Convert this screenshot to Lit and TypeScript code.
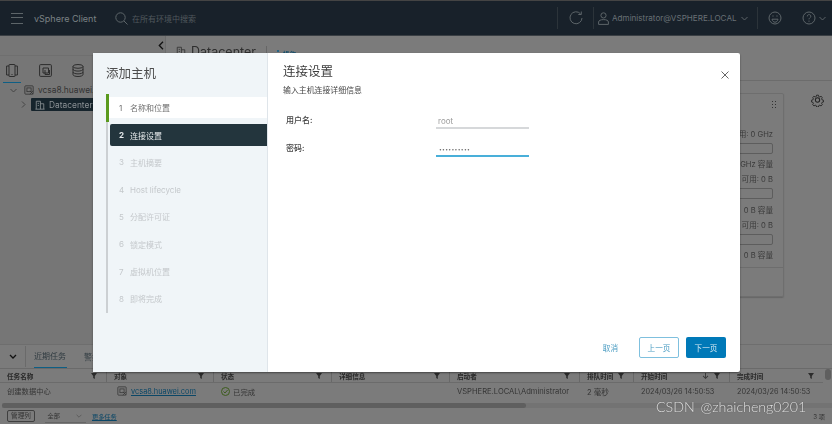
import { LitElement, css, html, svg } from "lit";
import { customElement } from "lit/decorators.js";

const steps = ["名称和位置", "连接设置", "主机摘要", "Host lifecycle", "分配许可证", "锁定模式", "虚拟机位置", "即将完成"];

const filterIcon = svg`<svg class="filter" viewBox="0 0 8 8" width="8" height="8"><path d="M1 1h6L4.8 4v3L3.2 6V4z" fill="#2c2c2c"/></svg>`;

const vmIcon = svg`<svg class="ic" viewBox="0 0 12 12" fill="none" stroke="currentColor"><rect x="1" y="1" width="10" height="10" rx="1"/><rect x="3.5" y="3.5" width="5" height="4.5"/><path d="M7 7l4 4M11 7l-4 4" stroke-width=".9"/></svg>`;

const dcIcon = svg`<svg class="ic" viewBox="0 0 12 12" fill="none" stroke="currentColor"><path d="M1.5 11V1.5h5V11M6.5 4.5h4V11M.5 11h11M3.2 4h1.6M3.2 6.5h1.6"/></svg>`;

@customElement("app-root")
export class AppRoot extends LitElement {
  static styles = css`
    :host {
      display: block;
      position: relative;
      width: 832px;
      height: 424px;
      overflow: hidden;
      background: #7b7b7b;
      color: #333;
      font-family: "Inter", "Noto Sans CJK SC", sans-serif;
      font-size: 8px;
    }
    .shell { display: flex; flex-direction: column; height: 424px; filter: blur(0.35px); }
    .ic { display: block; width: 10px; height: 10px; flex: none; }

    /* top bar */
    .top {
      flex: none;
      box-sizing: border-box;
      height: 36px;
      display: flex;
      align-items: center;
      padding-right: 6px;
      background: #18212a;
      border-top: 1px solid #444;
      border-bottom: 1px solid #3a3f44;
      color: #6e757a;
    }
    .burger { margin-left: 11px; width: 12px; height: 9px; border-top: 1px solid #5d6569; border-bottom: 1px solid #5d6569; position: relative; }
    .burger::after { content: ""; position: absolute; left: 0; right: 0; top: 3px; border-top: 1px solid #5d6569; }
    .brand { margin-left: 11px; font-size: 9px; color: #7b8185; width: 81px; }
    .search { display: block; }
    .hint { margin-left: 4px; font-size: 8px; color: #50585d; flex: 1; }
    .sep { width: 1px; height: 22px; background: #2c343a; }
    .user { margin-left: 3px; font-size: 8.1px; color: #687075; width: 129px; white-space: nowrap; }
    .chev { display: block; }

    /* middle */
    .middle { flex: 1; min-height: 0; display: flex; }
    .nav { flex: none; width: 166px; box-sizing: border-box; background: #767676; border-right: 1px solid #6c6c6c; }
    .collapse { height: 19px; display: flex; justify-content: flex-end; align-items: center; padding-right: 1px; border-bottom: 1px solid #6f6f6f; }
    .tabs { display: flex; gap: 15px; padding: 8px 0 0 3px; color: #2d2d2d; height: 19px; }
    .tab { width: 18px; height: 18px; display: flex; justify-content: center; }
    .tab.on { border-bottom: 1px solid #0e5f85; }
    .tree { font-size: 8.4px; color: #222; }
    .node { display: flex; align-items: center; gap: 4px; height: 14.5px; padding-left: 10px; color: #333; }
    .node.child { padding-left: 21px; gap: 5px; }
    .node .ic { margin-left: 3px; }
    .pick { display: flex; align-items: center; gap: 4px; background: #16242c; color: #8a9094; height: 13px; padding: 0 30px 0 4px; border-radius: 1px; }
    .pick .ic { margin-left: 0; }

    .content { flex: 1; min-width: 0; display: flex; flex-direction: column; }
    .head { flex: none; height: 45px; box-sizing: border-box; display: flex; align-items: flex-start; gap: 5px; padding: 10px 0 0 10px; border-bottom: 1px solid #6c6c6c; color: #333; }
    .dc-name { font-size: 12.5px; line-height: 12px; color: #2e2e2e; }
    .actions { margin-left: 5px; padding-left: 10px; border-left: 1px solid #666; height: 16px; display: flex; align-items: center; gap: 4px; color: #0c4b6a; font-size: 6.5px; font-weight: 600; }
    .body { flex: 1; display: flex; justify-content: flex-end; gap: 27px; padding: 12px 8px 0 0; }
    .card { width: 200px; height: 204px; box-sizing: border-box; border: 1px solid #6e6e6e; border-radius: 2px; box-shadow: 0 1px 1px #666; padding: 0 10px 0 0; display: flex; flex-direction: column; align-items: flex-end; color: #3a3a3a; font-size: 7.6px; }
    .grip { height: 32.5px; flex: none; padding-top: 6px; box-sizing: border-box; width: 7px; margin-right: -5px; }
    .grip i { display: block; width: 6px; height: 9px; background: radial-gradient(circle, #333 0.8px, transparent 1px) 0 0 / 3px 3px; }
    .line { height: 15px; flex: none; line-height: 15px; white-space: nowrap; }
    .bar { width: 150px; height: 11px; flex: none; box-sizing: border-box; border: 1px solid #5d5d5d; border-radius: 2px; margin: 1px 0 3.5px; }
    .rule { align-self: stretch; margin: 4px -10px 0 0; border-top: 1px solid #6d6d6d; }

    /* tasks */
    .tasks { flex: none; height: 80px; box-sizing: border-box; position: relative; display: flex; flex-direction: column; background: #7b7b7b; border-top: 1px solid #6e6e6e; }
    .task-tabs { flex: none; height: 23px; display: flex; align-items: center; border-bottom: 1px solid #6a6a6a; font-size: 8px; color: #2f3a40; }
    .tt-chev { width: 26px; box-sizing: border-box; height: 21px; display: flex; justify-content: center; align-items: center; border-right: 1px solid #6a6a6a; }
    .tt { margin-left: 8px; height: 23px; line-height: 23px; width: 33px; border-bottom: 1px solid #0e5f85; box-sizing: border-box; }
    .tt2 { margin-left: 17px; }
    .row { display: grid; grid-template-columns: 107px 107px 118px 118px 130px 54px 96px 1fr; margin-right: 9px; }
    .row.hd { height: 14px; font-size: 6.6px; font-weight: 600; color: #2a2a2a; border-bottom: 1px solid #6b6b6b; box-sizing: border-box; }
    .row.bd { height: 16px; padding-bottom: 3px; font-size: 7.6px; color: #353535; }
    .hc { display: flex; align-items: center; padding: 0 8px 0 7px; border-right: 1px solid #686868; position: relative; }
    .hc:last-child { border-right: 0; }
    .hc span { flex: 1; white-space: nowrap; }
    .filter { flex: none; }
    .sort { font-size: 8px; margin-right: 4px; color: #333; font-style: normal; }
    .c { display: flex; align-items: center; gap: 4px; padding-left: 7px; white-space: nowrap; }
    .c .ic { margin-left: 3px; color: #3a3a3a; }
    .c.nm { font-size: 7.3px; }
    .c.st { gap: 3px; font-size: 7.4px; }
    .c.dt { font-size: 7.3px; }
    .link { color: #0b4767; text-decoration: underline; font-size: 7.4px; }
    .sb { flex: none; height: 5px; margin: 1px 0 0 2px; background: #737373; }
    .sb i { display: block; width: 524px; height: 5px; border-radius: 3px; background: #5f5f5f; }
    .thumb { position: absolute; right: 1px; top: 24px; width: 6px; height: 11px; border-radius: 3px; background: #5f5f5f; }
    .foot { flex: 1; display: flex; align-items: center; font-size: 6.2px; color: #333; padding: 0 7px; }
    .btn-col { box-sizing: border-box; width: 28px; text-align: center; border: 1px solid #3f3f3f; border-radius: 2px; height: 12px; line-height: 10px; font-size: 6.6px; }
    .sel { box-sizing: border-box; margin-left: 10px; width: 41px; border-bottom: 1px solid #666; padding: 0 4px 0 2.5px; line-height: 13px; display: flex; justify-content: space-between; align-items: center; }
    .more { margin-left: 6px; color: #0b4767; text-decoration: underline; flex: 1; }

    /* dialog */
    .dlg {
      position: absolute;
      left: 93px;
      top: 53px;
      width: 647px;
      height: 319px;
      display: flex;
      background: #fff;
      border-radius: 2px;
      box-shadow: 0 1px 2px rgba(0, 0, 0, 0.45);
      filter: blur(0.35px);
    }
    .side { flex: none; width: 175px; box-sizing: border-box; background: #f0f5f8; border-right: 1px solid #dfe5ea; padding: 12px 0 0 13px; }
    .side h2 { margin: 0; height: 29px; line-height: 18px; font-size: 12.5px; font-weight: 400; color: #4d4d4d; }
    .rail { border-left: 2px solid #ccd0d3; }
    .step { height: 27.35px; display: flex; align-items: center; font-size: 8px; color: #c4c8cb; padding-left: 9px; margin-left: 2px; white-space: nowrap; }
    .step b { font-weight: 400; width: 11px; flex: none; }
    .step.done { box-sizing: border-box; height: 28px; margin: 0 0 0 -2px; padding: 3px 0 4px; border-left: 3px solid #5a9a1e; background: #fff; background-clip: content-box; color: #6f6f6f; }
    .step.done b { margin-left: 10px; }
    .step.cur { background: #23353d; color: #e6eaec; height: 22px; margin-top: 2px; margin-bottom: 2.6px; border-radius: 2px 0 0 2px; }
    .step.cur b { font-weight: 700; }
    .pane { flex: 1; min-width: 0; display: flex; flex-direction: column; padding: 11px 14px 14px 15px; position: relative; }
    .pane h3 { margin: 0; font-size: 12.5px; line-height: 16px; font-weight: 400; color: #3c3c3c; }
    .sub { margin-top: 4px; font-size: 7.9px; line-height: 13px; color: #444; }
    .close { position: absolute; right: 11px; top: 18px; display: block; }
    .form { margin-top: 9px; flex: 1; padding-left: 3px; }
    .f { display: grid; grid-template-columns: 150px 93px; height: 28px; align-items: start; font-size: 8px; color: #444; font-weight: 500; }
    .f label { line-height: 28px; }
    .inp { height: 23px; box-sizing: border-box; border-bottom: 2px solid #d6d8da; padding: 7px 0 0 2px; color: #9a9a9a; font-size: 8px; line-height: 16px; font-weight: 400; }
    .inp.act { border-bottom: 2px solid #49afd9; color: #666; letter-spacing: 0.3px; font-size: 5px; padding-left: 3px; }
    .btns { display: flex; justify-content: flex-end; align-items: center; font-size: 7.6px; }
    .b { box-sizing: border-box; width: 40px; height: 21px; display: flex; align-items: center; justify-content: center; border-radius: 2px; margin-left: 7px; }
    .b.ghost { color: #4a9cc2; margin: 0 14px 0 0; width: auto; }
    .b.line2 { border: 1px solid #7fc0de; color: #4a9cc2; }
    .b.prim { background: #0079b8; color: #d5e9f3; }

    .mark { position: absolute; left: 656px; top: 399px; font-family: "Lato", sans-serif; font-weight: 300; font-size: 14.2px; line-height: 16px; word-spacing: 2px; color: #e4e4e4; white-space: nowrap; text-shadow: 0 0 1px #444; }
  `;

  render() {
    return html`
      <div class="shell">
        <div class="top">
          <div class="burger"></div>
          <div class="brand">vSphere Client</div>
          <svg class="search" width="13" height="13" viewBox="0 0 13 13" fill="none" stroke="#5d6569"><circle cx="5.5" cy="5.5" r="4.7"/><path d="M9 9l3.5 3.5"/></svg>
          <div class="hint">在所有环境中搜索</div>
          <div class="sep"></div>
          <svg style="margin:0 10px 0 11px" width="14" height="14" viewBox="0 0 14 14" fill="none" stroke="#5d6569"><path d="M11.5 2.8A6 6 0 1 0 13 7M12.3 .5v3h-3"/></svg>
          <div class="sep"></div>
          <svg style="margin-left:4px" width="11" height="13" viewBox="0 0 11 13" fill="none" stroke="#5d6569"><circle cx="5.5" cy="3.4" r="2.6"/><path d="M.6 12.4V10c0-1.4 2-2.4 4.9-2.4s4.9 1 4.9 2.4v2.4z"/></svg>
          <div class="user">Administrator@VSPHERE.LOCAL</div>
          <svg class="chev" width="7" height="5" viewBox="0 0 7 5" fill="none" stroke="#5d6569"><path d="M.5 1l3 3 3-3"/></svg>
          <div class="sep" style="margin-left:9px"></div>
          <svg style="margin-left:10px" width="14" height="14" viewBox="0 0 14 14" fill="none" stroke="#5d6569"><circle cx="7" cy="7" r="6"/><path d="M4 8.2h6c-.4 2-1.6 3-3 3s-2.6-1-3-3zM4.4 5h1.2M8.4 5h1.2"/></svg>
          <svg style="margin-left:20px" width="14" height="14" viewBox="0 0 14 14" fill="none" stroke="#5d6569"><circle cx="7" cy="7" r="6"/><path d="M5.3 5.4C5.3 3 8.8 3 8.8 5.3c0 1.5-1.8 1.5-1.8 3M7 9.6v1.2"/></svg>
          <svg class="chev" style="margin-left:3px" width="7" height="5" viewBox="0 0 7 5" fill="none" stroke="#5d6569"><path d="M.5 1l3 3 3-3"/></svg>
        </div>

        <div class="middle">
          <div class="nav">
            <div class="collapse">
              <svg width="6" height="9" viewBox="0 0 6 9" fill="none" stroke="#111" stroke-width="1.3"><path d="M5 .8L1.3 4.5 5 8.2"/></svg>
            </div>
            <div class="tabs">
              <div class="tab on"><svg width="12" height="13" viewBox="0 0 12 13" fill="none" stroke="currentColor"><rect x="3" y=".5" width="6" height="12" rx=".5"/><path d="M3 2H.6v9H3M9 2h2.4v9H9M5.5 10.5h1"/></svg></div>
              <div class="tab"><svg width="13" height="13" viewBox="0 0 13 13" fill="none" stroke="currentColor"><rect x=".6" y=".6" width="11.8" height="11.8" rx="1"/><path d="M4 9V4h5.5v5zM6 6v4.5h4.5V6"/></svg></div>
              <div class="tab"><svg width="12" height="13" viewBox="0 0 12 13" fill="none" stroke="currentColor"><ellipse cx="6" cy="2.4" rx="5" ry="1.9"/><path d="M1 2.4v8.2c0 1 2.2 1.9 5 1.9s5-.9 5-1.9V2.4M1 5.2c0 1 2.2 1.9 5 1.9s5-.9 5-1.9M1 8c0 1 2.2 1.9 5 1.9S11 9 11 8"/></svg></div>
            </div>
            <div class="tree">
              <div class="node"><svg class="chev" width="7" height="5" viewBox="0 0 7 5" fill="none" stroke="#444"><path d="M.5 1l3 3 3-3"/></svg>${vmIcon}<span>vcsa8.huawei.com</span></div>
              <div class="node child"><svg width="5" height="7" viewBox="0 0 5 7" fill="none" stroke="#444"><path d="M1 .5l3 3-3 3"/></svg><div class="pick">${dcIcon}<span>Datacenter</span></div></div>
            </div>
          </div>

          <div class="content">
            <div class="head">
              ${dcIcon}
              <span class="dc-name">Datacenter</span>
              <span class="actions">
                <svg width="2" height="8" viewBox="0 0 2 8" fill="#0c5d86"><circle cx="1" cy="1" r="1"/><circle cx="1" cy="4" r="1"/><circle cx="1" cy="7" r="1"/></svg>
                <span>操作</span>
              </span>
            </div>
            <div class="body">
              <div class="card">
                <div class="grip"><i></i></div>
                <div class="line">可用: 0 GHz</div>
                <div class="bar"></div>
                <div class="line">0 GHz 容量</div>
                <div class="line">可用: 0 B</div>
                <div class="bar"></div>
                <div class="line">0 B 容量</div>
                <div class="line">可用: 0 B</div>
                <div class="bar"></div>
                <div class="line">0 B 容量</div>
                <div class="rule"></div>
              </div>
              <svg width="13" height="14" viewBox="0 0 24 24" fill="none" stroke="#222" stroke-width="1.9"><circle cx="12" cy="12" r="4"/><path d="M10 1.5h4l.7 3 2.3 1 2.7-1.6 2.8 2.8-1.6 2.7 1 2.3 3 .7v4l-3 .7-1 2.3 1.6 2.7-2.8 2.8-2.7-1.6-2.3 1-.7 3h-4l-.7-3-2.3-1-2.7 1.6-2.8-2.8 1.6-2.7-1-2.3-3-.7v-4l3-.7 1-2.3-1.6-2.7 2.8-2.8 2.7 1.6 2.3-1z" transform="translate(1.8 1.8) scale(.85)"/></svg>
            </div>
          </div>
        </div>

        <div class="tasks">
          <div class="task-tabs">
            <div class="tt-chev"><svg width="8" height="6" viewBox="0 0 8 6" fill="none" stroke="#111" stroke-width="1.3"><path d="M1 1l3 3 3-3"/></svg></div>
            <div class="tt">近期任务</div>
            <div class="tt2">警报</div>
          </div>
          <div class="row hd">
            <div class="hc"><span>任务名称</span>${filterIcon}</div>
            <div class="hc"><span>对象</span>${filterIcon}</div>
            <div class="hc"><span>状态</span>${filterIcon}</div>
            <div class="hc"><span>详细信息</span>${filterIcon}</div>
            <div class="hc"><span>启动者</span>${filterIcon}</div>
            <div class="hc"><span>排队时间</span>${filterIcon}</div>
            <div class="hc"><span>开始时间</span><i class="sort">↓</i>${filterIcon}</div>
            <div class="hc"><span>完成时间</span>${filterIcon}</div>
          </div>
          <div class="row bd">
            <div class="c nm">创建数据中心</div>
            <div class="c">${vmIcon}<span class="link">vcsa8.huawei.com</span></div>
            <div class="c st"><svg width="9" height="9" viewBox="0 0 9 9" fill="none" stroke="#3c5c1c"><circle cx="4.5" cy="4.5" r="4"/><path d="M2.5 4.5l1.5 1.5 2.6-3"/></svg>已完成</div>
            <div class="c"></div>
            <div class="c">VSPHERE.LOCAL\\Administrator</div>
            <div class="c">2 毫秒</div>
            <div class="c dt">2024/03/26 14:50:53</div>
            <div class="c dt">2024/03/26 14:50:53</div>
          </div>
          <div class="thumb"></div>
          <div class="sb"><i></i></div>
          <div class="foot">
            <div class="btn-col">管理列</div>
            <div class="sel"><span>全部</span><svg class="chev" width="6" height="4" viewBox="0 0 7 5" fill="none" stroke="#555"><path d="M.5 1l3 3 3-3"/></svg></div>
            <div class="more">更多任务</div>
            <div>3 项</div>
          </div>
        </div>
      </div>

      <div class="dlg">
        <div class="side">
          <h2>添加主机</h2>
          <div class="rail">
            ${steps.map((s, i) => html`
              <div class="step ${i === 0 ? "done" : i === 1 ? "cur" : ""}"><b>${i + 1}</b>${s}</div>
            `)}
          </div>
        </div>
        <div class="pane">
          <h3>连接设置</h3>
          <div class="sub">输入主机连接详细信息</div>
          <svg class="close" width="8" height="8" viewBox="0 0 8 8" fill="none" stroke="#666"><path d="M.5.5l7 7M7.5.5l-7 7"/></svg>
          <div class="form">
            <div class="f"><label>用户名:</label><div class="inp">root</div></div>
            <div class="f"><label>密码:</label><div class="inp act">••••••••••</div></div>
          </div>
          <div class="btns">
            <div class="b ghost">取消</div>
            <div class="b line2">上一页</div>
            <div class="b prim">下一页</div>
          </div>
        </div>
      </div>

      <div class="mark">CSDN @zhaicheng0201</div>
    `;
  }
}
